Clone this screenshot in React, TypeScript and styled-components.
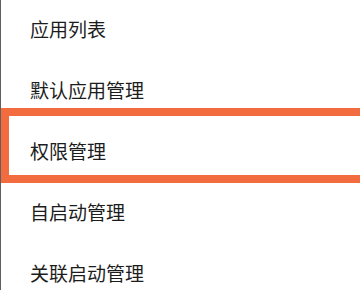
import React from 'react';
import styled, { createGlobalStyle } from 'styled-components';

const GlobalStyle = createGlobalStyle`
  html, body {
    margin: 0;
    padding: 0;
    background: #ffffff;
  }
  body {
    font-family: "Noto Sans CJK SC", "Noto Sans", sans-serif;
  }
`;

const Screen = styled.div`
  position: relative;
  width: 360px;
  height: 290px;
  overflow: hidden;
  background: #ffffff;
  box-sizing: border-box;
  border-left: 1px solid #5f5f5f;
`;

const List = styled.ul`
  list-style: none;
  margin: -2px 0 0;
  padding: 0;
`;

const Row = styled.li`
  height: 61px;
  display: flex;
  align-items: center;
  padding-left: 29px;
  font-size: 19px;
  color: #1c1c1c;
  letter-spacing: 0;
`;

const Highlight = styled.div`
  position: absolute;
  left: 0;
  right: -12px;
  top: 108px;
  height: 75px;
  box-sizing: border-box;
  border: 8px solid #f36c40;
  pointer-events: none;
`;

const items = ['应用列表', '默认应用管理', '权限管理', '自启动管理', '关联启动管理'];

export default function App() {
  return (
    <>
      <GlobalStyle />
      <Screen>
        <List>
          {items.map(text => (
            <Row key={text}>{text}</Row>
          ))}
        </List>
        <Highlight />
      </Screen>
    </>
  );
}
